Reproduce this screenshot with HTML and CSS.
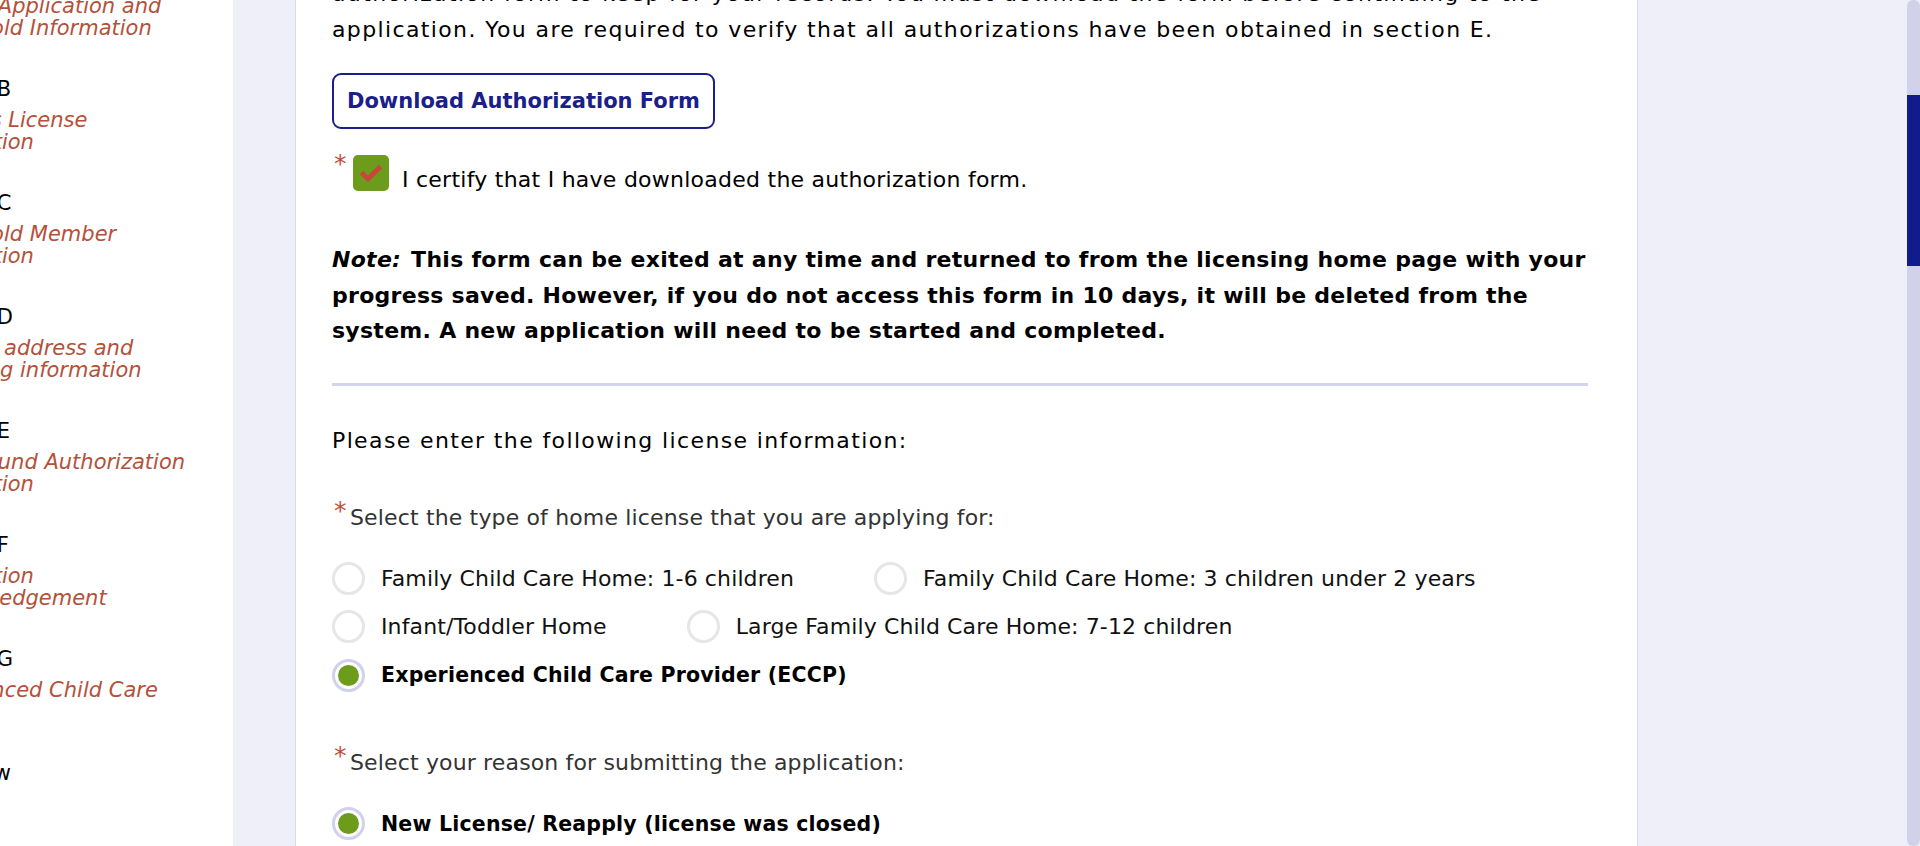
FILE: index.html
```html
<!DOCTYPE html>
<html lang="en">
<head>
<meta charset="utf-8">
<title>License Application - Section B</title>
<link rel="stylesheet" href="styles.css">
</head>
<body>
<div class="app">
  <aside class="sidebar">
    <nav class="steps">
      <div class="step">
        <div class="step-title">Section A</div>
        <div class="step-label">License Application and<br>Household Information</div>
      </div>
      <div class="step">
        <div class="step-title">Section B</div>
        <div class="step-label">Previous License<br>Information</div>
      </div>
      <div class="step">
        <div class="step-title">Section C</div>
        <div class="step-label">Household Member<br>Information</div>
      </div>
      <div class="step">
        <div class="step-title">Section D</div>
        <div class="step-label">Physical address and<br>operating information</div>
      </div>
      <div class="step">
        <div class="step-title">Section E</div>
        <div class="step-label">Background Authorization<br>Information</div>
      </div>
      <div class="step">
        <div class="step-title">Section F</div>
        <div class="step-label">Information<br>Acknowledgement</div>
      </div>
      <div class="step">
        <div class="step-title">Section G</div>
        <div class="step-label">Experienced Child Care</div>
      </div>
      <div class="step">
        <div class="step-title">Overview</div>
      </div>
    </nav>
  </aside>

  <main class="main">
    <section class="card">
      <div class="card-body">
        <p class="text intro">authorization form to keep for your records. You must download the form before continuing to the application. You are required to verify that all authorizations have been obtained in section E.</p>

        <button class="btn-outline" type="button">Download Authorization Form</button>

        <label class="certify">
          <span class="req req-check">*</span>
          <span class="checkbox checked">
            <svg viewBox="0 0 36 36" width="36" height="36" aria-hidden="true"><polyline points="8.5,17.5 15,24 27.5,11.5" fill="none" stroke="#c9453d" stroke-width="4.6" stroke-linecap="butt" stroke-linejoin="miter"/></svg>
          </span>
          <span class="certify-text">I certify that I have downloaded the authorization form.</span>
        </label>

        <p class="note"><em>Note:</em> This form can be exited at any time and returned to from the licensing home page with your progress saved. However, if you do not access this form in 10 days, it will be deleted from the system. A new application will need to be started and completed.</p>

        <hr class="divider">

        <p class="text lead">Please enter the following license information:</p>

        <div class="question q-type">
          <div class="q-label"><span class="req">*</span><span>Select the type of home license that you are applying for:</span></div>
          <div class="options">
            <div class="option"><span class="radio"></span><span class="opt-text">Family Child Care Home: 1-6 children</span></div>
            <div class="option"><span class="radio"></span><span class="opt-text">Family Child Care Home: 3 children under 2 years</span></div>
            <div class="option"><span class="radio"></span><span class="opt-text">Infant/Toddler Home</span></div>
            <div class="option"><span class="radio"></span><span class="opt-text">Large Family Child Care Home: 7-12 children</span></div>
            <div class="option selected"><span class="radio"></span><span class="opt-text">Experienced Child Care Provider (ECCP)</span></div>
          </div>
        </div>

        <div class="question q-reason">
          <div class="q-label"><span class="req">*</span><span>Select your reason for submitting the application:</span></div>
          <div class="options">
            <div class="option selected"><span class="radio"></span><span class="opt-text">New License/ Reapply (license was closed)</span></div>
          </div>
        </div>
      </div>
    </section>
  </main>

  <div class="scrollbar"><div class="thumb"></div></div>
</div>
</body>
</html>
```

FILE: styles.css
```css
* { box-sizing: border-box; }

html, body {
  margin: 0;
  height: 100%;
}

body {
  background: #eeeff8;
  font-family: "DejaVu Sans", Verdana, sans-serif;
  color: #000;
  overflow: hidden;
}

.app {
  display: flex;
  height: 846px;
  overflow: hidden;
}

/* ---------- sidebar ---------- */
.sidebar {
  width: 233px;
  flex: none;
  background: #fff;
  overflow: hidden;
}

.steps {
  margin-top: -37px;
  margin-left: -88px;
  width: 420px;
}

.step {
  height: 114px;
}

.step-title {
  font-size: 21px;
  line-height: 24px;
  color: #000;
  white-space: nowrap;
}

.step-label {
  margin-top: 9px;
  font-size: 21px;
  line-height: 21.5px;
  font-style: italic;
  color: #b4513a;
  white-space: nowrap;
}

/* ---------- main ---------- */
.main {
  flex: 1;
  padding-left: 62px;
  overflow: hidden;
}

.card {
  width: 1343px;
  min-height: 1000px;
  margin-top: -24px;
  background: #fff;
  border-left: 1px solid #d9dae7;
  border-right: 1px solid #d9dae7;
  padding: 0 49px 40px 36px;
}

.card-body {
  display: flex;
  flex-direction: column;
  align-items: flex-start;
}

.text {
  margin: 0;
  font-size: 22px;
  line-height: 35.5px;
  letter-spacing: 1.37px;
}

.btn-outline {
  margin-top: 26px;
  height: 56px;
  padding: 0 13px;
  border: 2.5px solid #1b2089;
  border-radius: 9px;
  background: #fff;
  color: #1b2089;
  font-family: inherit;
  font-size: 21px;
  font-weight: bold;
  letter-spacing: 0;
  cursor: pointer;
}

.certify {
  margin-top: 26px;
  display: flex;
  align-items: flex-start;
}

.req {
  color: #c0503c;
  font-size: 25px;
  line-height: 20px;
  flex: none;
}

.req-check {
  width: 21px;
  margin-top: -1px;
  padding-left: 2px;
}

.checkbox {
  width: 36px;
  height: 36px;
  flex: none;
  border-radius: 5px;
  background: #6d9b1b;
  display: block;
}

.checkbox svg { display: block; }

.certify-text {
  margin-left: 13px;
  padding-top: 7px;
  font-size: 22px;
  line-height: 35.5px;
  letter-spacing: 0.25px;
}

.note {
  margin: 44.5px 0 0;
  font-size: 22px;
  font-weight: bold;
  line-height: 35.5px;
  letter-spacing: 0.28px;
  width: 1256px;
}

.note em {
  font-style: italic;
  padding-right: 2px;
}

.divider {
  align-self: stretch;
  margin: 34px 0 0;
  height: 3px;
  border: 0;
  background: #d3d4eb;
}

.lead {
  margin-top: 37px;
}

.question {
  display: flex;
  flex-direction: column;
  align-items: flex-start;
}

.q-type { margin-top: 41.5px; }
.q-reason { margin-top: 52px; }

.q-label {
  display: flex;
  align-items: flex-start;
  font-size: 22px;
  line-height: 35.5px;
  color: #333;
  letter-spacing: 0.15px;
}

.q-label .req {
  width: 18px;
  padding-left: 2px;
  margin-top: 1px;
}

.options {
  margin-top: 25px;
  display: flex;
  flex-wrap: wrap;
  column-gap: 80px;
  row-gap: 12.5px;
  width: 1256px;
}

.option {
  display: flex;
  align-items: center;
  gap: 16px;
  height: 36px;
}

.radio {
  width: 33px;
  height: 33px;
  flex: none;
  border: 3px solid #e6e6e6;
  border-radius: 50%;
  background: #fff;
  display: flex;
  align-items: center;
  justify-content: center;
}

.opt-text {
  font-size: 22px;
  color: #111;
  white-space: nowrap;
  letter-spacing: 0.12px;
}

.option.selected .radio {
  border-color: #d0d1ea;
}

.option.selected .radio::after {
  content: "";
  width: 21px;
  height: 21px;
  border-radius: 50%;
  background: #6d9b1b;
}

.option.selected .opt-text {
  font-weight: bold;
  font-size: 20.5px;
  color: #000;
  letter-spacing: 0.2px;
}

/* ---------- scrollbar ---------- */
.scrollbar {
  width: 13px;
  flex: none;
  background: #d1d2e9;
  border-radius: 6px;
  overflow: hidden;
}

.thumb {
  margin-top: 95px;
  height: 171px;
  background: #111c8c;
}
```
